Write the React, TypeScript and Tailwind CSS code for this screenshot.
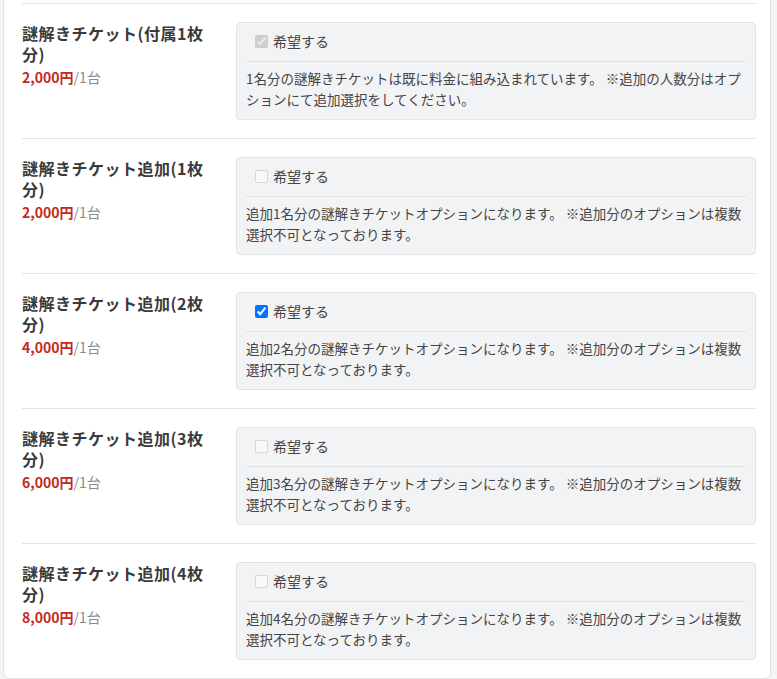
import React from "react";

type Item = { title: string; price: string; desc: string; checked: boolean; disabled: boolean };

const items: Item[] = [
  {
    title: "謎解きチケット(付属1枚分)",
    price: "2,000円",
    desc: "1名分の謎解きチケットは既に料金に組み込まれています。 ※追加の人数分はオプションにて追加選択をしてください。",
    checked: true,
    disabled: true,
  },
  {
    title: "謎解きチケット追加(1枚分)",
    price: "2,000円",
    desc: "追加1名分の謎解きチケットオプションになります。 ※追加分のオプションは複数選択不可となっております。",
    checked: false,
    disabled: false,
  },
  {
    title: "謎解きチケット追加(2枚分)",
    price: "4,000円",
    desc: "追加2名分の謎解きチケットオプションになります。 ※追加分のオプションは複数選択不可となっております。",
    checked: true,
    disabled: false,
  },
  {
    title: "謎解きチケット追加(3枚分)",
    price: "6,000円",
    desc: "追加3名分の謎解きチケットオプションになります。 ※追加分のオプションは複数選択不可となっております。",
    checked: false,
    disabled: false,
  },
  {
    title: "謎解きチケット追加(4枚分)",
    price: "8,000円",
    desc: "追加4名分の謎解きチケットオプションになります。 ※追加分のオプションは複数選択不可となっております。",
    checked: false,
    disabled: false,
  },
];

export default function App() {
  return (
    <div
      className="min-h-screen bg-[#f4f4f4] pl-[3px] pr-[6px]"
      style={{ fontFamily: '"Noto Sans CJK JP", "Noto Sans", sans-serif' }}
    >
      <div className="bg-white border-x border-b border-[#e2e2e2] rounded-b-[6px] pl-[18px] pr-[14px] pt-[3px]">
        {items.map((it, i) => (
          <div key={i} className="flex border-t border-[#e4e4e4] pt-[18px] pb-[18px]">
            <div className="w-[186px] shrink-0">
              <div className="text-[16px] leading-[21px] font-bold text-[#3a3a3a] tracking-[0.5px] pt-[1px]">
                {it.title}
              </div>
              <div className="text-[14px] leading-[21px] mt-[2px]">
                <span className="font-bold text-[#c4291c]">{it.price}</span>
                <span className="text-[#8a8a8a]">/1台</span>
              </div>
            </div>
            <div className="ml-[28px] flex-1 bg-[#f2f3f5] border border-[#e2e4e7] rounded-[4px] px-[9px] pt-[8px] pb-[9px]">
              <label className="flex items-center h-[21px] pl-[9px] gap-[5px] text-[14px] text-[#444]">
                {it.checked ? (
                  <input
                    type="checkbox"
                    defaultChecked
                    disabled={it.disabled}
                    className="w-[13px] h-[13px] m-0"
                  />
                ) : (
                  <input
                    type="checkbox"
                    className="appearance-none w-[13px] h-[13px] m-0 rounded-[2px] border border-[#d4d6da] bg-[#f7f8f9]"
                  />
                )}
                <span>希望する</span>
              </label>
              <div className="mt-[9px] border-t border-[#dfe1e4]" />
              <p className="mt-[6px] text-[13.5px] leading-[21px] text-[#444]">{it.desc}</p>
            </div>
          </div>
        ))}
      </div>
    </div>
  );
}
